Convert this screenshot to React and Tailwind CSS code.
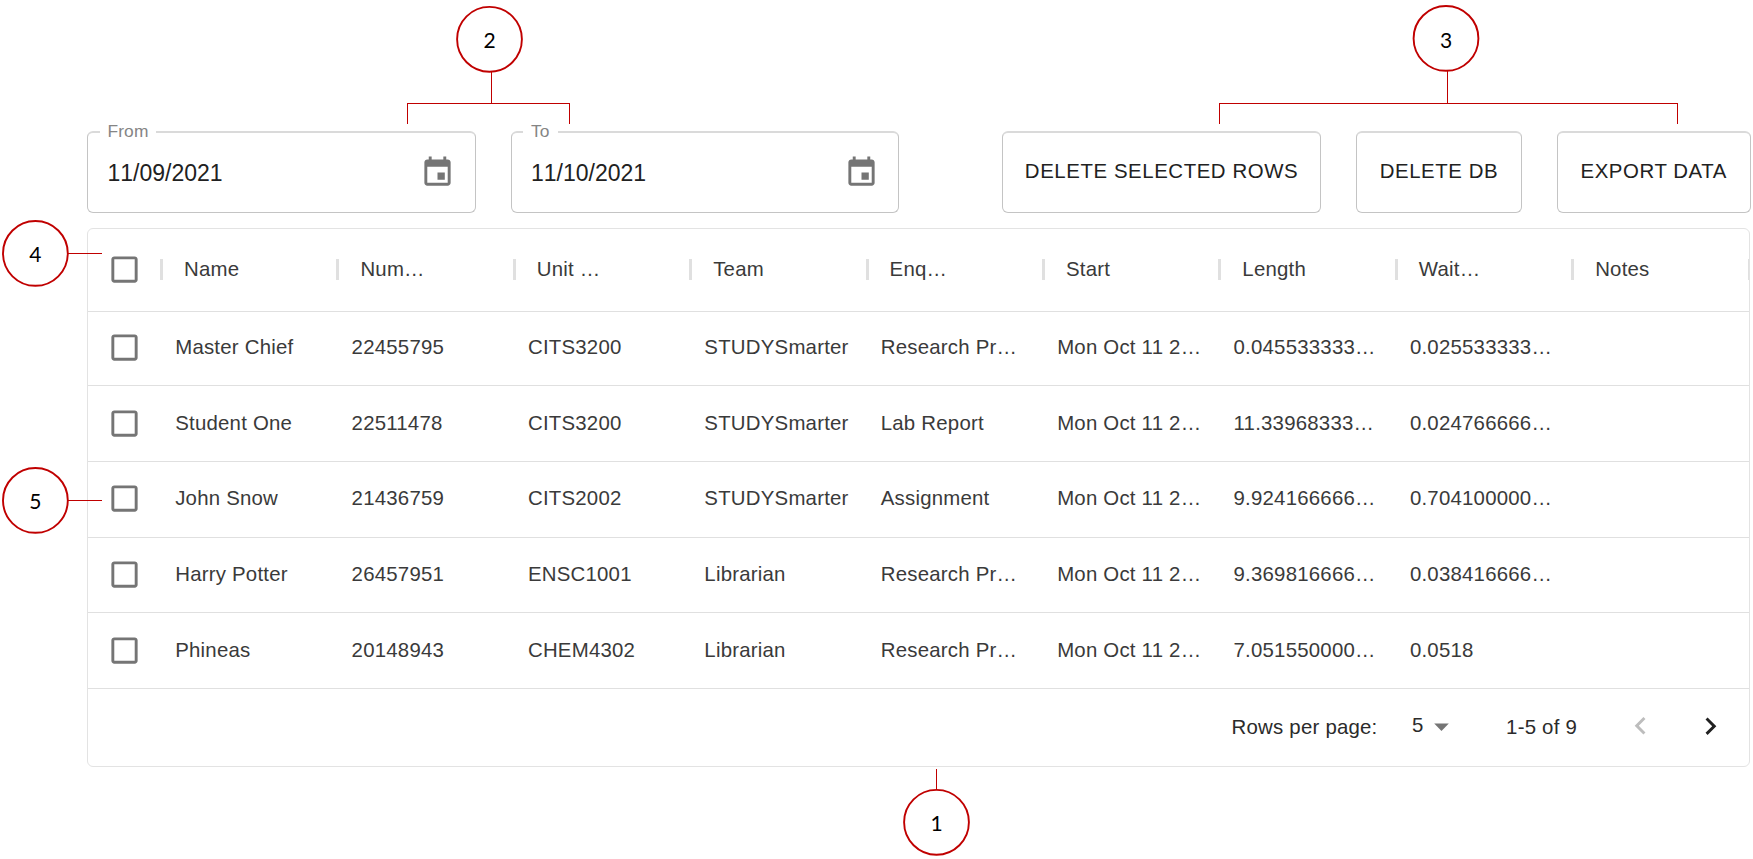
const COLUMNS = ["Name", "Num…", "Unit …", "Team", "Enq…", "Start", "Length", "Wait…", "Notes"];

const ROWS = [
  ["Master Chief", "22455795", "CITS3200", "STUDYSmarter", "Research Pr…", "Mon Oct 11 2…", "0.045533333…", "0.025533333…", ""],
  ["Student One", "22511478", "CITS3200", "STUDYSmarter", "Lab Report", "Mon Oct 11 2…", "11.33968333…", "0.024766666…", ""],
  ["John Snow", "21436759", "CITS2002", "STUDYSmarter", "Assignment", "Mon Oct 11 2…", "9.924166666…", "0.704100000…", ""],
  ["Harry Potter", "26457951", "ENSC1001", "Librarian", "Research Pr…", "Mon Oct 11 2…", "9.369816666…", "0.038416666…", ""],
  ["Phineas", "20148943", "CHEM4302", "Librarian", "Research Pr…", "Mon Oct 11 2…", "7.051550000…", "0.0518", ""],
];

const ROW_HEIGHTS = ["h-[74px] pb-px", "h-[76px]", "h-[75.5px]", "h-[75.5px]", "h-[76px]"];

function Icon({ d, className = "" }) {
  return (
    <svg viewBox="0 0 24 24" className={`size-[35px] shrink-0 fill-current ${className}`}>
      <path d={d} />
    </svg>
  );
}

const EVENT =
  "M17 12h-5v5h5v-5zM16 1v2H8V1H6v2H5c-1.11 0-1.99.9-1.99 2L3 19c0 1.1.89 2 2 2h14c1.1 0 2-.9 2-2V5c0-1.1-.9-2-2-2h-1V1h-2zm3 18H5V8h14v11z";
const CHECKBOX =
  "M19 5v14H5V5h14m0-2H5c-1.1 0-2 .9-2 2v14c0 1.1.9 2 2 2h14c1.1 0 2-.9 2-2V5c0-1.1-.9-2-2-2z";

function DateField({ label, value }) {
  return (
    <div className="relative flex h-[82px] w-[388.5px] items-center justify-between rounded-[6px] border border-t-2 border-[#c4c4c4] border-t-[#dadada] pr-[19.5px] pl-[19.5px]">
      <span className="absolute -top-[14px] left-[11.5px] bg-white px-[8px] text-[17.4px] leading-[24px] tracking-[0.1px] text-[#858585]">
        {label}
      </span>
      <span className="pt-px text-[23px] leading-none text-[#212121] [font-kerning:none]">{value}</span>
      <Icon d={EVENT} className="mb-px text-[#757575]" />
    </div>
  );
}

function ActionButton({ children, className }) {
  return (
    <button
      className={`h-[82px] rounded-[6px] border border-t-2 border-[#c4c4c4] border-t-[#dadada] pb-[2px] text-center text-[20.4px] tracking-[0.58px] whitespace-nowrap text-[#212121] ${className}`}
    >
      {children}
    </button>
  );
}

function CheckCell() {
  return (
    <div className="flex w-[72px] shrink-0 items-center justify-center pb-px">
      <Icon d={CHECKBOX} className="text-[#757575]" />
    </div>
  );
}

function Callout({ n, cx, cy, path }) {
  return (
    <g>
      <path d={path} fill="none" stroke="#c00000" strokeWidth="1" shapeRendering="crispEdges" />
      <circle cx={cx} cy={cy} r="32.4" fill="#ffffff" stroke="#c00000" strokeWidth="1.9" />
      <text x={cx} y={n === "3" ? cy + 9.6 : cy + 9} textAnchor="middle" className="fill-black font-['Lato',sans-serif] text-[21px]">
        {n}
      </text>
    </g>
  );
}

export default function App() {
  return (
    <div className="relative h-[859px] w-[1753px] overflow-hidden bg-white pt-[131px] pl-[87px] font-['Liberation_Sans',Arial,sans-serif]">
      <div className="flex h-[82px] w-[1663.5px] justify-between">
        <div className="flex gap-[35px]">
          <DateField label="From" value="11/09/2021" />
          <DateField label="To" value="11/10/2021" />
        </div>
        <div className="flex gap-[35px]">
          <ActionButton className="w-[319px]">DELETE SELECTED ROWS</ActionButton>
          <ActionButton className="w-[166px]">DELETE DB</ActionButton>
          <ActionButton className="w-[193.5px]">EXPORT DATA</ActionButton>
        </div>
      </div>

      <div className="mt-[15px] w-[1663px] overflow-hidden rounded-[6px] border border-[#e3e3e3] text-[20.4px] tracking-[0.22px] text-[#3a3a3a]">
        <div className="flex h-[83px] border-b border-[#e0e0e0]">
          <CheckCell />
          <div className="mb-px h-[21px] w-[3px] shrink-0 self-center bg-[#e0e0e0]" />
          {COLUMNS.map((c) => (
            <div key={c} className="flex w-[176.4px] shrink-0 items-center justify-between pb-px pl-[21px]">
              <span>{c}</span>
              <span className="h-[21px] w-[3px] bg-[#e0e0e0]" />
            </div>
          ))}
        </div>
        {ROWS.map((r, i) => (
          <div key={r[0]} className={`flex border-b border-[#e0e0e0] [font-kerning:none] ${ROW_HEIGHTS[i]}`}>
            <CheckCell />
            {r.map((v, j) => (
              <div
                key={j}
                className="flex w-[176.4px] shrink-0 items-center pb-px pl-[15.2px] whitespace-nowrap [font-kerning:auto]"
              >
                {v}
              </div>
            ))}
          </div>
        ))}
        <div className="flex h-[77px] items-center justify-end pr-[21.5px] pb-px text-[#2b2b2b]">
          <span>Rows per page:</span>
          <span className="ml-[34.5px] pb-[3px]">5</span>
          <Icon d="M7 10l5 5 5-5z" className="mb-px ml-[0.5px] text-[#757575]" />
          <span className="ml-[47px]">1-5 of 9</span>
          <Icon d="M15.41 16.09l-4.58-4.59 4.58-4.59L14 5.5l-6 6 6 6z" className="mb-px ml-[45.5px] text-[#bdbdbd]" />
          <Icon d="M8.59 16.34l4.58-4.59-4.58-4.59L10 5.75l6 6-6 6z" className="mb-px ml-[35px] text-[#212121]" />
        </div>
      </div>

      <svg viewBox="0 0 1753 859" className="pointer-events-none absolute inset-0 h-[859px] w-[1753px]">
        <Callout n="1" cx={936.5} cy={822.3} path="M936.5 769V790" />
        <Callout n="2" cx={489.5} cy={39.3} path="M491.5 70V103.5M407.5 124V103.5H569.5V124" />
        <Callout n="3" cx={1446} cy={38.4} path="M1447.5 70V103.5M1219.5 124V103.5H1677.5V124" />
        <Callout n="4" cx={35.4} cy={253.4} path="M68 253.5H102" />
        <Callout n="5" cx={35.4} cy={500.4} path="M68 500.5H102" />
      </svg>
    </div>
  );
}
